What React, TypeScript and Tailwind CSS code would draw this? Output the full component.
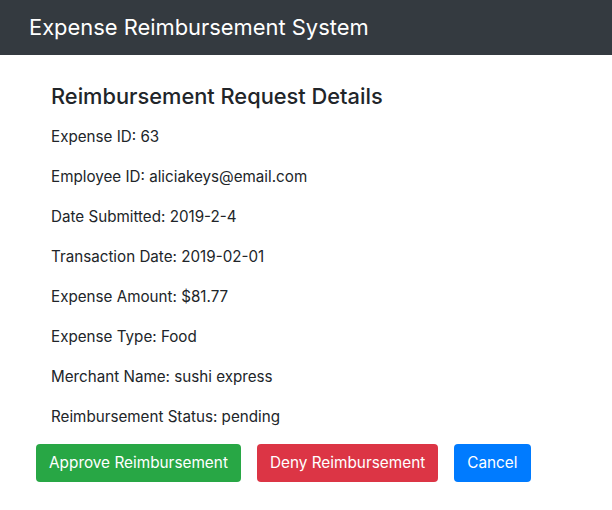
const details: [string, string][] = [
  ["Expense ID", "63"],
  ["Employee ID", "aliciakeys@email.com"],
  ["Date Submitted", "2019-2-4"],
  ["Transaction Date", "2019-02-01"],
  ["Expense Amount", "$81.77"],
  ["Expense Type", "Food"],
  ["Merchant Name", "sushi express"],
  ["Reimbursement Status", "pending"],
];

export default function App() {
  return (
    <div className="min-h-screen bg-white text-[#212529] font-['Inter',sans-serif]">
      {/* Navbar */}
      <nav className="h-[55px] bg-[#343a40] flex items-center px-[29px]">
        <span className="text-white text-[21.9px] leading-[30px] -mt-[1px]">Expense Reimbursement System</span>
      </nav>

      <div className="px-[36px]">
        <div className="px-[15px] pt-[27px]">
          <h4 className="text-[21.8px] font-medium leading-[29px] mb-[14px]">Reimbursement Request Details</h4>
          {details.map(([label, value]) => (
            <p key={label} className="text-[15.2px] leading-[24px] mb-[16px]">
              {label}: {value}
            </p>
          ))}
        </div>

        <div className="flex gap-[16px] -mt-px">
          <button type="button" className="h-[38px] px-[13px] rounded-[4px] bg-[#28a745] text-white text-[15.35px]">
            Approve Reimbursement
          </button>
          <button type="button" className="h-[38px] px-[13px] rounded-[4px] bg-[#dc3545] text-white text-[15.35px]">
            Deny Reimbursement
          </button>
          <button type="button" className="h-[38px] px-[13px] rounded-[4px] bg-[#007bff] text-white text-[15.35px]">
            Cancel
          </button>
        </div>
      </div>
    </div>
  );
}
